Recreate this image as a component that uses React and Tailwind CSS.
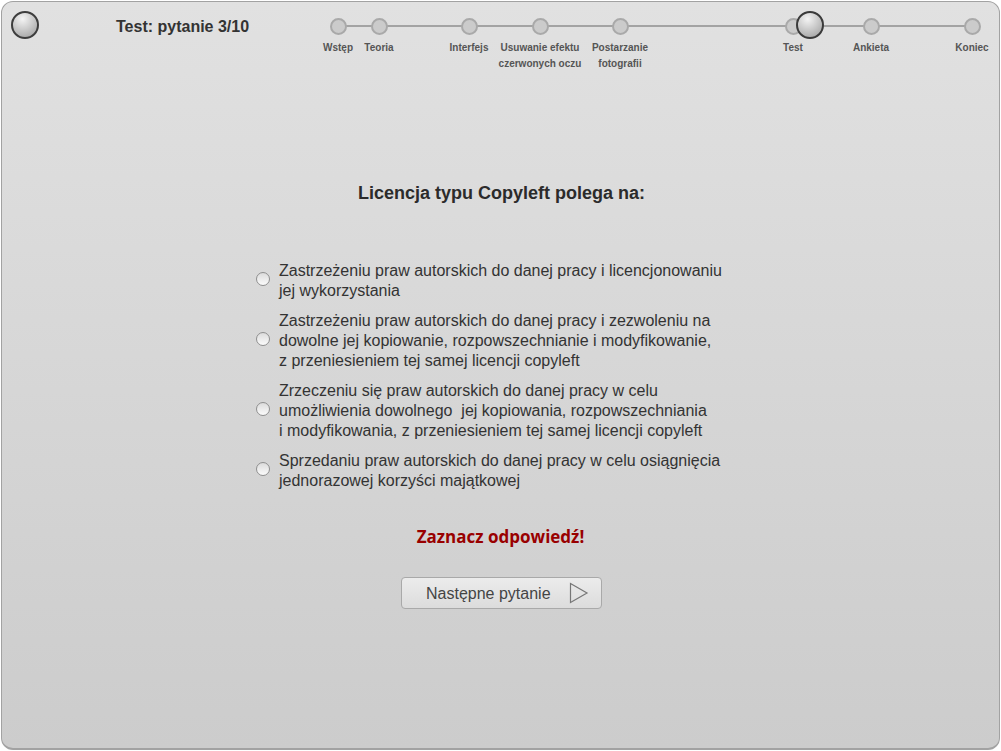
import { useState } from 'react';

const steps = [
  { x: 338, label: ['Wstęp'] },
  { x: 379, label: ['Teoria'] },
  { x: 469, label: ['Interfejs'] },
  { x: 540, label: ['Usuwanie efektu', 'czerwonych oczu'] },
  { x: 620, label: ['Postarzanie', 'fotografii'] },
  { x: 793, label: ['Test'] },
  { x: 871, label: ['Ankieta'] },
  { x: 972, label: ['Koniec'] },
];

const answers = [
  ['Zastrzeżeniu praw autorskich do danej pracy i licencjonowaniu', 'jej wykorzystania'],
  [
    'Zastrzeżeniu praw autorskich do danej pracy i zezwoleniu na',
    'dowolne jej kopiowanie, rozpowszechnianie i modyfikowanie,',
    'z przeniesieniem tej samej licencji copyleft',
  ],
  [
    'Zrzeczeniu się praw autorskich do danej pracy w celu',
    'umożliwienia dowolnego\u00a0 jej kopiowania, rozpowszechniania',
    'i modyfikowania, z przeniesieniem tej samej licencji copyleft',
  ],
  ['Sprzedaniu praw autorskich do danej pracy w celu osiągnięcia', 'jednorazowej korzyści majątkowej'],
];

function Timeline() {
  // node centres are given in page pixels; the panel content starts at x=2
  return (
    <div className="absolute inset-0">
      <div className="absolute left-[336px] top-[23px] h-[2px] w-[634px] bg-[#a3a3a3]" />
      {steps.map((s) => (
        <div key={s.x}>
          <div
            className="absolute top-[16px] h-[17px] w-[17px] rounded-full border-2 border-[#a9a9a9] bg-[#cbcbcb]"
            style={{ left: s.x - 2 - 8.5 }}
          />
          <div
            className="absolute top-[38px] w-[120px] text-center text-[10px] font-bold leading-[16px] text-[#555]"
            style={{ left: s.x - 2 - 60 }}
          >
            {s.label.map((l) => (
              <div key={l}>{l}</div>
            ))}
          </div>
        </div>
      ))}
      <div className="absolute left-[794px] top-[9px] h-[28px] w-[28px] rounded-full border-2 border-[#3a3a3a] bg-[radial-gradient(circle_at_40%_25%,#f4f4f4,#b5b5b5_70%,#9a9a9a)]" />
    </div>
  );
}

export default function App() {
  const [choice, setChoice] = useState(null);

  return (
    <div className="h-[751px] w-[1001px] bg-white p-px font-['Liberation_Sans',Arial,sans-serif]">
      <div className="flex h-full flex-col items-center rounded-[12px] border border-b-2 border-[#a2a2a2] bg-gradient-to-b from-[#e1e1e1] to-[#cccccc]">
        <div className="relative h-[90px] w-full">
          <div className="flex items-start">
            <div className="ml-[9px] mt-[9px] h-[28px] w-[28px] rounded-full border-2 border-[#3d3d3d] bg-[radial-gradient(circle_at_40%_25%,#f4f4f4,#b5b5b5_70%,#9a9a9a)]" />
            <h1 className="ml-[77px] mt-[15px] text-[16px] font-bold leading-[20px] text-[#333]">
              Test: pytanie 3/10
            </h1>
          </div>
          <Timeline />
        </div>

        <h2 className="mt-[90px] ml-[2px] text-[18px] font-bold leading-[22px] text-[#2b2b2b]">
          Licencja typu Copyleft polega na:
        </h2>

        <div className="mt-[57px] flex flex-col gap-[10px] self-start pl-[254px]">
          {answers.map((lines, i) => (
            <label key={i} className="flex cursor-pointer items-center gap-[9px]">
              <span
                onClick={() => setChoice(i)}
                className="mb-[5px] flex h-[14px] w-[14px] shrink-0 items-center justify-center rounded-full border border-[#8f8f8f] bg-gradient-to-b from-[#dcdcdc] to-[#fbfbfb]"
              >
                {choice === i && <span className="h-[6px] w-[6px] rounded-full bg-[#444]" />}
              </span>
              <span className="text-[16px] leading-[20px] text-[#333]" onClick={() => setChoice(i)}>
                {lines.map((l) => (
                  <div key={l}>{l}</div>
                ))}
              </span>
            </label>
          ))}
        </div>

        <p className="mt-[35px] font-['Open_Sans',sans-serif] text-[17px] font-bold leading-[22px] text-[#990000]">
          Zaznacz odpowiedź!
        </p>

        <button
          type="button"
          className="mt-[29px] ml-[2px] flex h-[32px] w-[201px] items-center rounded-[4px] border border-[#a9a9a9] bg-gradient-to-b from-[#ececec] to-[#dcdcdc] pl-[24px] text-[16px] text-[#444]"
        >
          <span className="mt-[2px]">Następne pytanie</span>
          <svg width="20" height="22" viewBox="0 0 20 22" className="ml-[18px]">
            <path d="M1.5 1.5 L18 11 L1.5 20.5 Z" fill="none" stroke="#777" strokeWidth="1.2" />
          </svg>
        </button>
      </div>
    </div>
  );
}
